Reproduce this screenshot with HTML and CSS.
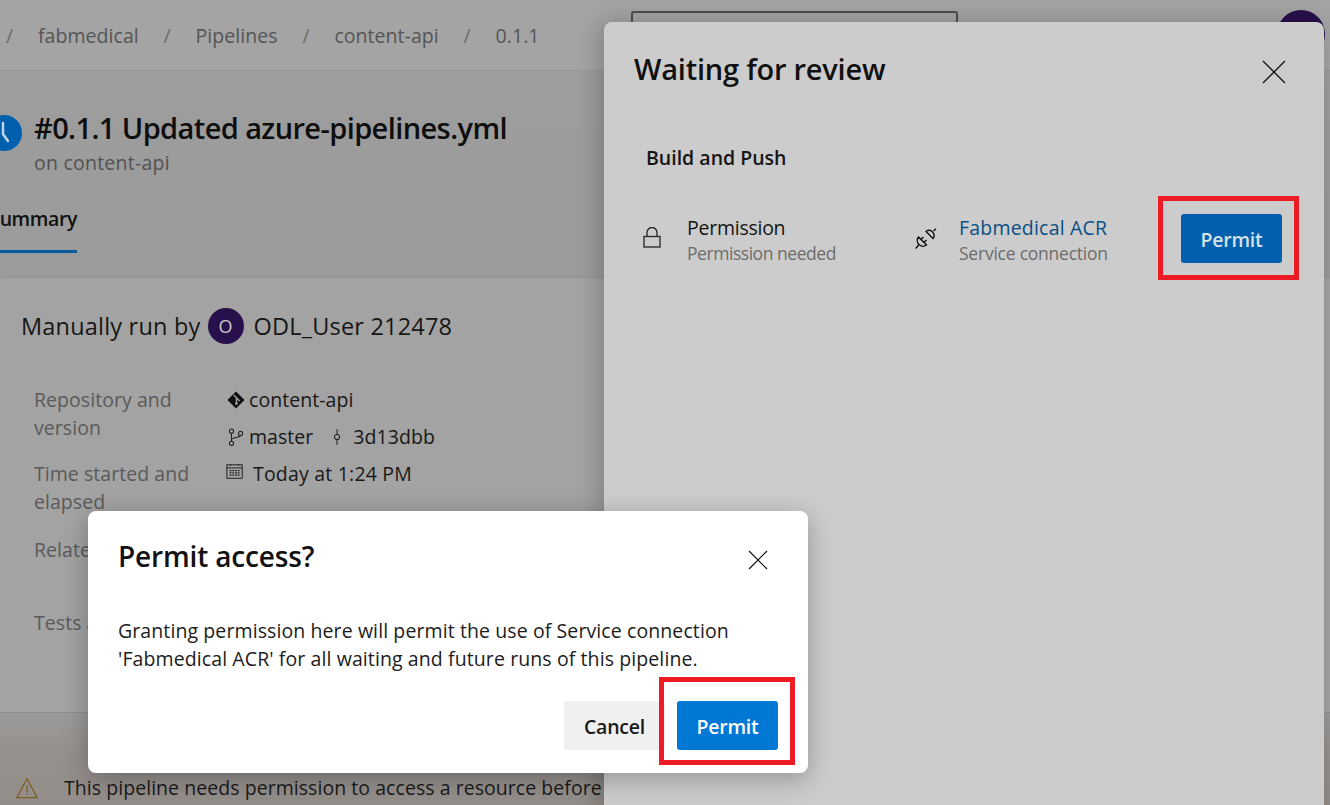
FILE: index.html
```html
<!DOCTYPE html>
<html lang="en">
<head>
<meta charset="utf-8">
<title>Permit access</title>
<link rel="stylesheet" href="styles.css">
</head>
<body>
<div class="page">
  <header class="topbar">
    <nav class="crumbs">
      <span class="sep">/</span><span>fabmedical</span>
      <span class="sep">/</span><span>Pipelines</span>
      <span class="sep">/</span><span>content-api</span>
      <span class="sep">/</span><span>0.1.1</span>
    </nav>
    <div class="search"></div>
    <div class="top-avatar"></div>
  </header>

  <section class="runhead">
    <div class="runtitle">
      <svg class="clock" viewBox="0 0 36 36"><circle cx="18" cy="18" r="18" fill="#0060ad"/><path d="M17 8v11l5 7" fill="none" stroke="#c9d6e2" stroke-width="2.4" stroke-linecap="round"/></svg>
      <div>
        <h1>#0.1.1 Updated azure-pipelines.yml</h1>
        <p class="onbranch">on content-api</p>
      </div>
    </div>
    <div class="tab"><span>Summary</span></div>
  </section>

  <section class="card">
    <div class="byline">
      <span>Manually run by</span>
      <span class="user-avatar">O</span>
      <span>ODL_User 212478</span>
    </div>
    <div class="details">
      <div class="label">Repository and version</div>
      <div class="value">
        <div class="line">
          <svg class="ic" viewBox="0 0 20 20"><path d="M10 0.5 19.5 10 10 19.500 0.5 10Z" fill="#111"/><path d="M7.500 4.500 14 11M10.500 7.500v7" fill="none" stroke="#a3a3a3" stroke-width="1.500"/><circle cx="10.500" cy="14" r="1.500" fill="#a3a3a3"/></svg>
          <span>content-api</span>
        </div>
        <div class="line">
          <svg class="ic" viewBox="0 0 20 20" fill="none" stroke="#222" stroke-width="1.200"><circle cx="5" cy="3.500" r="2.300"/><circle cx="5" cy="17" r="2.300"/><circle cx="15" cy="6" r="2.300"/><path d="M5 6v8.500M5 13c0-3 10-2 10-4.700"/></svg>
          <span>master</span>
          <svg class="ic commit" viewBox="0 0 14 20" fill="none" stroke="#222" stroke-width="1.200"><circle cx="7" cy="10" r="3"/><path d="M7 1v6M7 13v6"/></svg>
          <span>3d13dbb</span>
        </div>
      </div>
      <div class="label">Time started and elapsed</div>
      <div class="value">
        <div class="line time">
          <svg class="ic cal" viewBox="0 0 20 20" fill="none" stroke="#222" stroke-width="1.100"><rect x="1" y="2" width="17" height="15"/><path d="M1 5.500h17M5 1v2M14 1v2"/><path d="M4 8.500h11M4 11h11M4 13.500h11" stroke-dasharray="2 1" stroke-width="1.500"/></svg>
          <span>Today at 1:24 PM</span>
        </div>
      </div>
      <div class="label">Related</div>
      <div class="value"></div>
      <div class="label single">Tests and coverage</div>
      <div class="value"></div>
    </div>
  </section>

  <section class="warn">
    <svg class="warn-ic" viewBox="0 0 24 24" fill="none" stroke="#7d5c1c" stroke-width="1.300"><path d="M12 2 23 22.500H1Z"/><path d="M12 9v8M12 18.500v1.500"/></svg>
    <span>This pipeline needs permission to access a resource before this run can continue</span>
  </section>

  <aside class="panel">
    <div class="panel-head">
      <h2>Waiting for review</h2>
      <svg class="x-big" viewBox="0 0 24 24" fill="none" stroke="#111" stroke-width="1.300"><path d="M1 1 23 23M23 1 1 23"/></svg>
    </div>
    <h3>Build and Push</h3>
    <div class="checks">
      <div class="check perm">
        <svg class="lock" viewBox="0 0 18 21" fill="none" stroke="#222" stroke-width="1.300"><rect x="1" y="9.500" width="16" height="10.500"/><path d="M4 9.500V5.500a5 5 0 0 1 10 0v4"/></svg>
        <div>
          <div class="check-name">Permission</div>
          <div class="check-sub">Permission needed</div>
        </div>
      </div>
      <div class="check res">
        <svg class="plug" viewBox="0 0 22 22" fill="none" stroke="#111" stroke-width="1.400"><path d="M11 3.500 18 10.500A5 5 0 0 0 11 3.500ZM18.500 3 21 .8"/><path d="M3.500 9 11.500 17A5.700 5.700 0 0 1 3.500 9ZM3.500 17 .8 20.500M6 11.500 8.500 9M9 14.500 11.500 12"/></svg>
        <div>
          <a class="check-link">Fabmedical ACR</a>
          <div class="check-sub svc">Service connection</div>
        </div>
      </div>
      <button class="btn btn-dim mark-panel">Permit</button>
    </div>
  </aside>

  <div class="dialog">
    <div class="dialog-head">
      <h2>Permit access?</h2>
      <svg class="x-small" viewBox="0 0 20 20" fill="none" stroke="#111" stroke-width="1.200"><path d="M1 1 19 19M19 1 1 19"/></svg>
    </div>
    <p class="dialog-body">Granting permission here will permit the use of Service connection<br>'Fabmedical ACR' for all waiting and future runs of this pipeline.</p>
    <div class="dialog-foot">
      <button class="btn btn-cancel">Cancel</button>
      <button class="btn btn-primary mark-dialog">Permit</button>
    </div>
  </div>
</div>
</body>
</html>
```

FILE: styles.css
```css
* { box-sizing: border-box; }
html, body { margin: 0; height: 100%; }
body { font-family: "Open Sans", "Noto Sans", "Liberation Sans", sans-serif; color: #111; }
h1, h2, h3, p { margin: 0; font-weight: 600; }

.page {
  position: relative;
  width: 1330px;
  height: 805px;
  overflow: hidden;
  background: #a3a3a3;
  display: flex;
  flex-direction: column;
}

.topbar {
  height: 71px;
  flex: none;
  border-bottom: 1px solid #969696;
  display: flex;
  align-items: center;
  position: relative;
  background: #a4a4a4;
}
.crumbs {
  display: flex;
  gap: 24.8px;
  padding-left: 6px;
  font-size: 19.5px;
  letter-spacing: 0.05px;
  color: #555;
  white-space: nowrap;
}
.sep { color: #6a6a6a; }
.search {
  position: absolute;
  left: 631px;
  top: 11px;
  width: 327px;
  height: 40px;
  border: 2px solid #4e4e4e;
  border-radius: 3px;
}
.top-avatar {
  position: absolute;
  left: 1277px;
  top: 10px;
  width: 48px;
  height: 48px;
  border-radius: 50%;
  background: #28104c;
}

.runhead {
  height: 207px;
  flex: none;
  background: linear-gradient(#9d9d9d, #9b9b9b);
  border-bottom: 1px solid #999;
  display: flex;
  flex-direction: column;
}
.runtitle {
  display: flex;
  gap: 12px;
  margin-left: -14px;
  padding-top: 39px;
  height: 132px;
}
.clock { width: 36px; height: 36px; margin-top: 5px; flex: none; }
h1 {
  font-size: 29px;
  line-height: 36px;
  letter-spacing: -0.6px;
  color: #0e0e0e;
  white-space: nowrap;
}
.onbranch {
  font-weight: 400;
  font-size: 19.500px;
  line-height: 28px;
  letter-spacing: 0.23px;
  color: #525252;
  margin-top: 3px;
}
.tab {
  width: 77px;
  height: 50px;
  border-bottom: 3px solid #035a9c;
  display: flex;
  justify-content: flex-end;
  font-size: 19.500px;
  font-weight: 600;
  line-height: 32px;
  letter-spacing: -0.4px;
  color: #111;
  white-space: nowrap;
}

.card {
  height: 435px;
  flex: none;
  background: #a3a3a3;
  border-bottom: 1px solid #8f8f8f;
  box-shadow: 0 2px 5px rgba(0, 0, 0, .12);
  padding: 30px 0 0 21px;
}
.byline {
  display: flex;
  align-items: center;
  gap: 7px;
  height: 36px;
  font-size: 23.500px;
  letter-spacing: 0.2px;
  color: #161616;
}
.user-avatar {
  width: 36px;
  height: 36px;
  border-radius: 50%;
  background: #28104c;
  color: #c8c8c8;
  font-size: 18px;
  display: flex;
  align-items: center;
  justify-content: center;
  margin-right: 3px;
}
.details {
  display: grid;
  grid-template-columns: 193px 1fr;
  grid-template-rows: 74px 76px 73px auto;
  margin: 42px 0 0 13px;
  font-size: 19.500px;
  line-height: 28px;
  letter-spacing: 0.05px;
}
.label { color: #5a5a5a; width: 170px; }
.single { white-space: nowrap; }
.line { display: flex; align-items: center; gap: 4px; height: 28px; color: #181818; }
.line + .line { margin-top: 9px; }
.time { gap: 9px; letter-spacing: 0.2px; }
.ic { width: 18px; height: 18px; flex: none; }
.cal { margin-left: -1px; margin-top: -4px; }
.commit { width: 12px; margin-left: 14px; margin-right: 6px; }

.warn {
  flex: 1;
  background: linear-gradient(#9b9b9b 0, #96918e 36px, #938d89 100%);
  display: flex;
  align-items: center;
  gap: 26px;
  padding: 57px 0 0 16px;
  font-size: 19.500px;
  letter-spacing: 0.05px;
  color: #1a1a1a;
  white-space: nowrap;
}
.warn-ic { width: 22px; height: 24px; flex: none; }

.panel {
  position: absolute;
  left: 604px;
  top: 22px;
  width: 720px;
  height: 800px;
  background: #ccc;
  border-radius: 8px;
  box-shadow: -4px 0 24px rgba(0, 0, 0, .22);
  padding: 25px 38px 0 30px;
}
.panel-head {
  display: flex;
  justify-content: space-between;
  align-items: center;
  height: 42px;
}
.panel-head h2 {
  font-size: 29px;
  letter-spacing: -0.22px;
  color: #111;
  font-weight: 600;
}
.x-big { width: 24px; height: 24px; margin-top: 7px; }
h3 {
  font-size: 19.500px;
  font-weight: 600;
  letter-spacing: 0;
  line-height: 28px;
  margin: 55px 0 0 12px;
  color: #151515;
}
.checks {
  display: flex;
  align-items: flex-start;
  margin-top: 43px;
  margin-left: 9px;
}
.check { display: flex; align-items: center; }
.perm { width: 272px; gap: 26px; }
.res { width: 266px; gap: 22px; }
.lock { width: 18px; height: 21px; flex: none; margin-top: -6px; }
.plug { width: 22px; height: 22px; flex: none; margin-top: -4px; }
.check-name, .check-link {
  font-size: 19.500px;
  line-height: 26px;
  letter-spacing: -0.25px;
  color: #151515;
  display: block;
}
.check-link { color: #0b4f85; letter-spacing: 0.2px; }
.check-sub {
  font-size: 17.500px;
  line-height: 25px;
  letter-spacing: -0.45px;
  color: #6c6c6c;
  white-space: nowrap;
}
.svc { letter-spacing: -0.23px; }

.btn {
  position: relative;
  width: 101px;
  height: 49px;
  border: 0;
  border-radius: 3px;
  font-family: inherit;
  font-size: 19.500px;
  font-weight: 600;
  letter-spacing: -0.2px;
  padding: 1px 0 0;
}
.btn-dim { background: #0060ad; color: #d8e0e8; margin-top: -1px; }
.btn-primary { background: #0078d4; color: #fff; }
.btn-cancel { background: #f0f0f0; color: #1a1a1a; }
.mark-panel::after, .mark-dialog::after {
  content: "";
  position: absolute;
  border: 5px solid #ed1c24;
}
.mark-panel::after { left: -23px; right: -17px; top: -18px; bottom: -17px; }
.mark-dialog::after { left: -18px; right: -17px; top: -24px; bottom: -15px; }

.dialog {
  position: absolute;
  left: 88px;
  top: 511px;
  width: 720px;
  height: 262px;
  background: #fff;
  border-radius: 8px;
  box-shadow: 0 6px 26px rgba(0, 0, 0, .28);
  padding: 25px 30px 0 30px;
}
.dialog-head {
  display: flex;
  justify-content: space-between;
  align-items: center;
  height: 40px;
}
.dialog-head h2 {
  font-size: 28px;
  letter-spacing: -0.15px;
  font-weight: 600;
  color: #111;
}
.x-small { width: 20px; height: 20px; margin: 8px 10px 0 0; }
.dialog-body {
  font-size: 19.500px;
  font-weight: 400;
  line-height: 28px;
  letter-spacing: 0.1px;
  color: #1c1c1c;
  margin: 41px 0 0 0;
  white-space: nowrap;
}
.dialog-foot {
  display: flex;
  justify-content: flex-end;
  gap: 12px;
  margin-top: 28px;
}
```
